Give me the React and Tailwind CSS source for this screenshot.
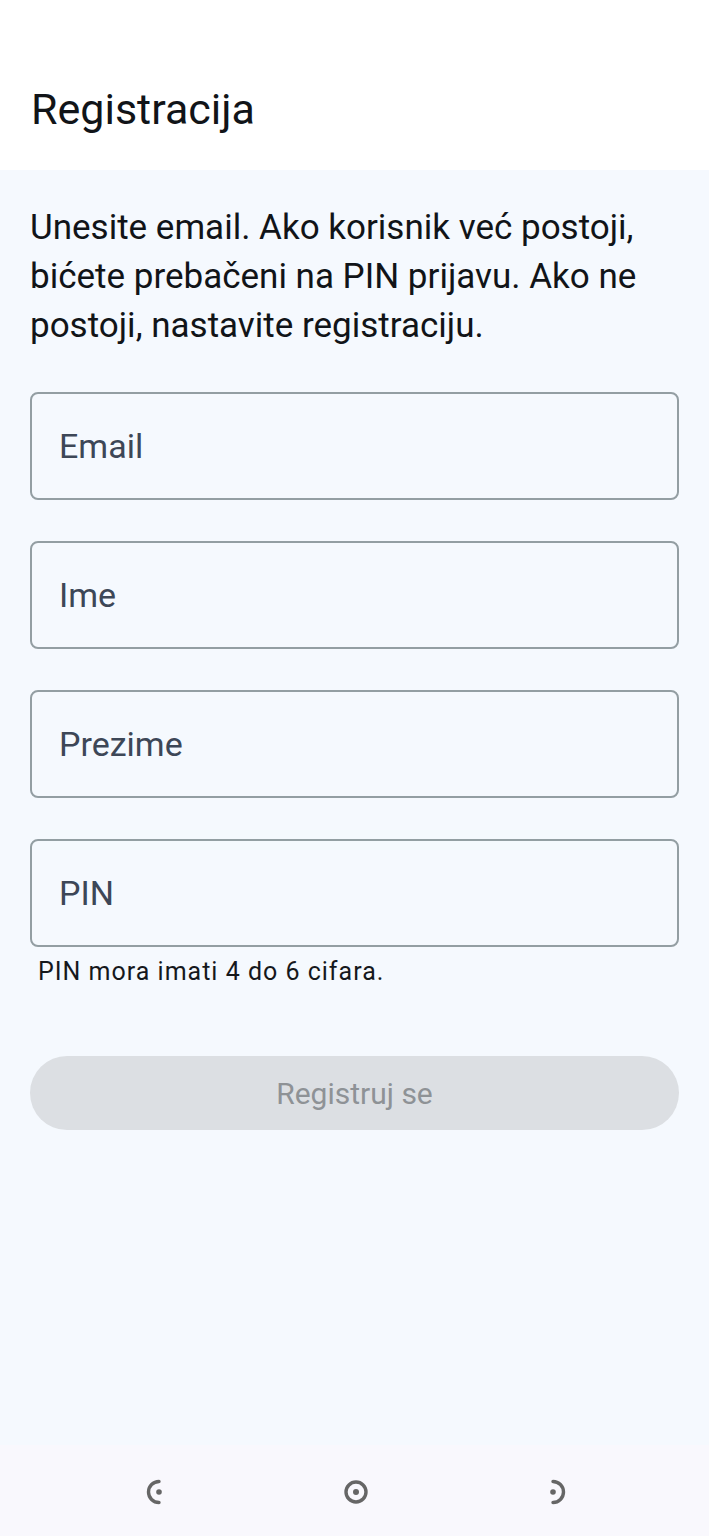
import React from 'react'

const fields = ['Email', 'Ime', 'Prezime', 'PIN']

function NavIcon({ type }) {
  // Samsung-style gesture hint icons
  if (type === 'home') {
    return (
      <svg width="28" height="28" viewBox="0 0 28 28" fill="none">
        <circle cx="14" cy="14" r="10" stroke="#666666" strokeWidth="3.4" />
        <circle cx="14" cy="14" r="3" fill="#666666" />
      </svg>
    )
  }
  const left = type === 'back'
  return (
    <svg width="28" height="28" viewBox="0 0 28 28" fill="none">
      <path
        d={left ? 'M14 3.5 A10.5 10.5 0 0 0 14 24.5' : 'M14 3.5 A10.5 10.5 0 0 1 14 24.5'}
        stroke="#666666"
        strokeWidth="3.4"
        strokeLinecap="round"
      />
      <circle cx="14" cy="14" r="2.8" fill="#666666" />
    </svg>
  )
}

export default function App() {
  return (
    <div
      className="w-[709px] h-[1536px] flex flex-col bg-[#f5f9fe]"
      style={{ fontFamily: 'Roboto, "Noto Sans", sans-serif' }}
    >
      <header className="h-[170px] bg-white px-[31px] pt-[82px]">
        <h1 className="text-[43px] leading-[54px] text-[#111418] font-normal">Registracija</h1>
      </header>

      <main className="flex-1 px-[30px] pt-[33px]">
        <p className="text-[35px] leading-[49px] text-[#111418]">
          Unesite email. Ako korisnik već postoji, bićete prebačeni na PIN prijavu. Ako ne postoji, nastavite registraciju.
        </p>

        <div className="mt-[42px] flex flex-col gap-[41px]">
          {fields.map(label => (
            <div
              key={label}
              className="h-[108px] rounded-[8px] border-2 border-[#939ea3] flex items-center px-[27px]"
            >
              <span className="text-[34px] text-[#3d4757]">{label}</span>
            </div>
          ))}
        </div>

        <p className="mt-[10px] pl-[8px] text-[25px] leading-[30px] tracking-[1px] text-[#15181c]">PIN mora imati 4 do 6 cifara.</p>

        <button className="mt-[69px] w-full h-[74px] rounded-full bg-[#dcdfe3] text-[30px] text-[#8e9296]">
          Registruj se
        </button>
      </main>

      <nav className="h-[91px] bg-[#f9f8fd] flex items-start pt-[33px]">
        <div className="w-full flex justify-between pl-[145px] pr-[142px]">
          <NavIcon type="back" />
          <NavIcon type="home" />
          <NavIcon type="recent" />
        </div>
      </nav>
    </div>
  )
}
